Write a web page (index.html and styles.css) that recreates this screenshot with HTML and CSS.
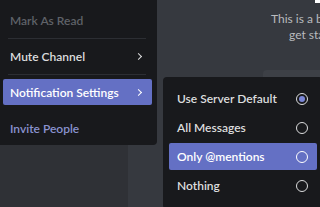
FILE: index.html
```html
<!DOCTYPE html>
<html lang="en">
<head>
<meta charset="UTF-8" />
<title>Notification Settings</title>
<link rel="stylesheet" href="styles.css">
</head>
<body>
<div class="app">
  <div class="channels"></div>
  <div class="chat">
    <div class="heading-tail"></div>
    <div class="welcome">
      <div class="welcome-line">This is a beginning of the server.</div>
      <div class="welcome-line second">get started</div>
    </div>
    <div class="invite-btn"></div>
  </div>
</div>

<div class="menu">
  <div class="item disabled">Mark As Read</div>
  <div class="sep"></div>
  <div class="item">Mute Channel <span class="chev"></span></div>
  <div class="sep"></div>
  <div class="item active">Notification Settings <span class="chev"></span></div>
  <div class="item brand">Invite People</div>
</div>

<div class="submenu">
  <div class="sub-item">Use Server Default <span class="radio checked"></span></div>
  <div class="sub-item">All Messages <span class="radio"></span></div>
  <div class="sub-item active">Only @mentions <span class="radio"></span></div>
  <div class="sub-item">Nothing <span class="radio"></span></div>
</div>
</body>
</html>
```

FILE: styles.css
```css
body{margin:0;padding:0;font-family:Lato,"Liberation Sans",sans-serif;background:#36393f;overflow:hidden;}
.app{display:flex;height:207px;}
.channels{width:128px;background:#2f3136;}
.chat{flex:1;background:#36393f;position:relative;overflow:hidden;}
.heading-tail{position:absolute;right:0;top:0;width:5px;height:3px;background:#fff;}
.welcome{padding-top:11px;padding-left:143px;white-space:nowrap;color:#b9bbbe;font-size:12px;line-height:16px;}
.welcome-line.second{padding-left:18px;}
.invite-btn{position:absolute;left:135px;top:70px;width:120px;height:30px;background:#3d4046;border-radius:4px;}

.menu{position:absolute;left:0;top:0;width:157px;height:145px;box-sizing:border-box;padding:7px 5px 0 3px;background:#18191c;border-radius:0 0 4px 0;}
.item{display:flex;align-items:center;justify-content:space-between;height:26px;padding:0 11px 0 7px;border-radius:2px;font-size:12px;font-weight:600;color:#dcddde;}
.item.disabled{color:#5f6268;}
.item.active{background:#6470c4;color:#fff;}
.item.brand{margin-top:10px;color:#8a93cf;}
.sep{height:1px;margin:5px 6px 4px 5px;background:#2c2e33;}
.chev{width:4px;height:4px;border-right:1.5px solid currentColor;border-top:1.5px solid currentColor;transform:rotate(45deg);}

.submenu{position:absolute;left:163px;top:77px;width:160px;height:132px;box-sizing:border-box;padding:8px 6px 0 6px;background:#18191c;border-radius:4px;}
.sub-item{display:flex;align-items:center;justify-content:space-between;height:27px;margin-bottom:2px;padding:0 8px;border-radius:2px;font-size:12px;font-weight:600;color:#dcddde;}
.sub-item.active{background:#6470c4;color:#fff;}
.radio{width:10px;height:10px;border:1.5px solid currentColor;border-radius:50%;position:relative;margin-right:1px;}
.radio.checked::after{content:"";position:absolute;left:2px;top:2px;width:6px;height:6px;border-radius:50%;background:#7a86d6;}
```
